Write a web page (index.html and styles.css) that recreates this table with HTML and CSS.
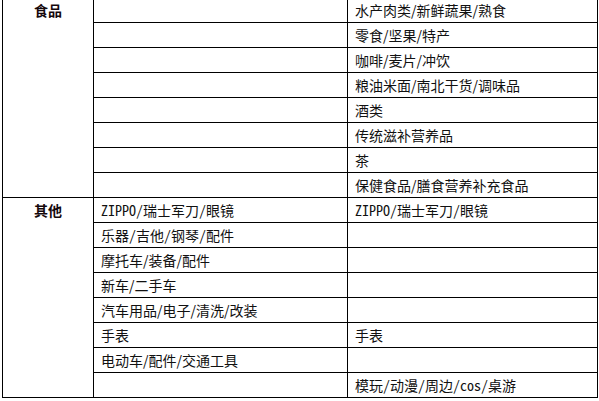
FILE: index.html
```html
<!DOCTYPE html>
<html lang="zh-CN">
<head>
<meta charset="utf-8">
<title>类目</title>
<link rel="stylesheet" href="styles.css">
</head>
<body>
<table class="cat-table">
  <colgroup>
    <col class="col-label">
    <col class="col-mid">
    <col class="col-right">
  </colgroup>
  <tbody>
    <tr>
      <td class="label" rowspan="8">食品</td>
      <td></td>
      <td>水产肉类/新鲜蔬果/熟食</td>
    </tr>
    <tr><td></td><td>零食/坚果/特产</td></tr>
    <tr><td></td><td>咖啡/麦片/冲饮</td></tr>
    <tr><td></td><td>粮油米面/南北干货/调味品</td></tr>
    <tr><td></td><td>酒类</td></tr>
    <tr><td></td><td>传统滋补营养品</td></tr>
    <tr><td></td><td>茶</td></tr>
    <tr><td></td><td>保健食品/膳食营养补充食品</td></tr>
    <tr>
      <td class="label" rowspan="8">其他</td>
      <td class="mono">ZIPPO/瑞士军刀/眼镜</td>
      <td class="mono">ZIPPO/瑞士军刀/眼镜</td>
    </tr>
    <tr><td class="mono">乐器/吉他/钢琴/配件</td><td></td></tr>
    <tr><td>摩托车/装备/配件</td><td></td></tr>
    <tr><td>新车/二手车</td><td></td></tr>
    <tr><td>汽车用品/电子/清洗/改装</td><td></td></tr>
    <tr><td>手表</td><td>手表</td></tr>
    <tr><td>电动车/配件/交通工具</td><td></td></tr>
    <tr><td></td><td class="mono">模玩/动漫/周边/cos/桌游</td></tr>
  </tbody>
</table>
</body>
</html>
```
FILE: styles.css
```css
html, body {
  margin: 0;
  padding: 0;
  background: #ffffff;
}

body {
  font-family: "Noto Sans CJK SC", "Noto Sans", sans-serif;
  font-size: 14px;
  color: #111111;
}

.cat-table {
  border-collapse: collapse;
  table-layout: fixed;
  width: 595px;
  margin: -3px 0 0 2px;
}

.col-label { width: 91px; }
.col-mid { width: 254px; }
.col-right { width: 250px; }

.cat-table td {
  border: 1px solid #000000;
  height: 24px;
  padding: 0 0 0 7px;
  line-height: 16px;
  vertical-align: middle;
  white-space: nowrap;
}

.cat-table td.label {
  vertical-align: top;
  text-align: center;
  padding: 4px 0 0 0;
  font-weight: bold;
  color: #14080c;
}

.cat-table td.mono {
  font-family: "Noto Sans Mono CJK SC", "Noto Sans CJK SC", monospace;
}
```
